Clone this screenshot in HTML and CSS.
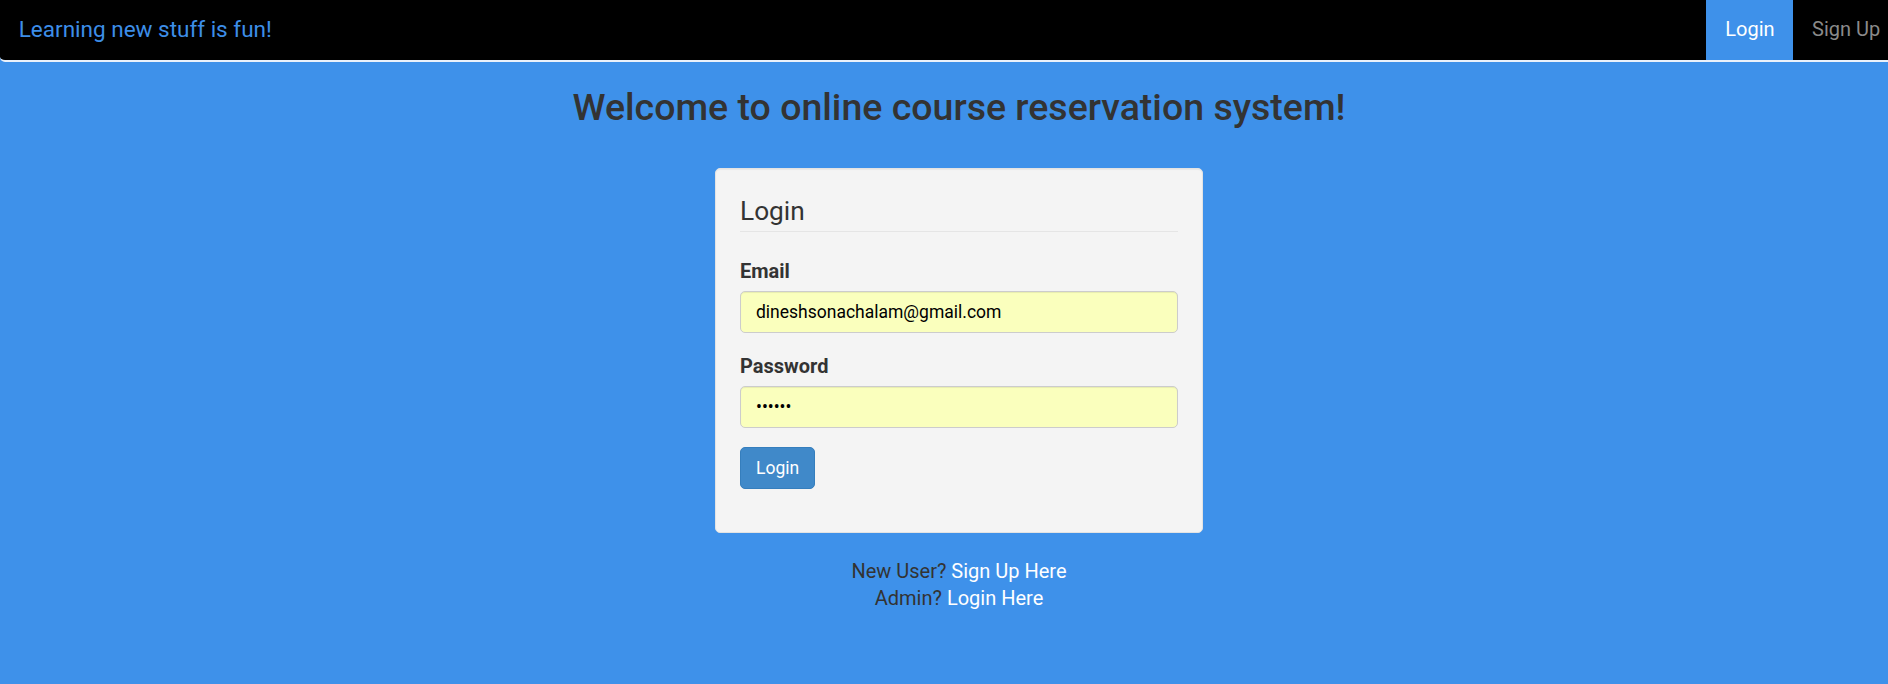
FILE: index.html
```html
<!DOCTYPE html>
<html lang="en">
<head>
<meta charset="utf-8">
<title>Online course reservation system</title>
<link rel="stylesheet" href="styles.css">
</head>
<body>
<nav class="navbar">
  <a class="brand" href="#">Learning new stuff is fun!</a>
  <ul class="nav">
    <li class="nav-item active"><a href="#">Login</a></li>
    <li class="nav-item"><a href="#">Sign Up</a></li>
  </ul>
</nav>
<main class="page">
  <h2 class="title">Welcome to online course reservation system!</h2>
  <div class="well">
    <form class="login-form">
      <fieldset class="fieldset">
        <legend class="legend">Login</legend>
        <div class="form-group">
          <label class="label" for="email">Email</label>
          <input class="form-control" id="email" type="text" value="dineshsonachalam@gmail.com">
        </div>
        <div class="form-group">
          <label class="label" for="password">Password</label>
          <input class="form-control" id="password" type="password" value="secret">
        </div>
        <div class="form-group">
          <button class="btn" type="button">Login</button>
        </div>
      </fieldset>
    </form>
  </div>
  <p class="footer-links">New User? <a href="#">Sign Up Here</a><br>Admin? <a href="#">Login Here</a></p>
</main>
</body>
</html>
```

FILE: styles.css
```css
html, body {
  margin: 0;
  padding: 0;
}

body {
  font-family: "Roboto", "Helvetica Neue", Arial, sans-serif;
  font-size: 20px;
  line-height: 1.42857;
  color: #333;
  background: #3e91ea;
  overflow-x: hidden;
  min-height: 684px;
}

.navbar {
  display: flex;
  justify-content: space-between;
  align-items: stretch;
  height: 60px;
  background: #000;
  border-bottom: 2px solid #eaf1fa;
  border-bottom-left-radius: 5px;
  overflow: hidden;
}

.brand {
  display: flex;
  align-items: center;
  padding: 0 18.75px 2px;
  font-size: 22.5px;
  line-height: 25px;
  color: #3d8ee8;
  text-decoration: none;
}

.nav {
  display: flex;
  list-style: none;
  margin: 0 -11px 0 0;
  padding: 0;
}

.nav-item a {
  display: flex;
  align-items: center;
  box-sizing: border-box;
  height: 60px;
  padding: 0 18.75px 3px;
  line-height: 28px;
  color: #8a8a8a;
  text-decoration: none;
}

.nav-item.active a {
  background: #3e91ea;
  color: #fff;
}

.page {
  display: flex;
  flex-direction: column;
  align-items: center;
  padding-left: 30px;
}

.title {
  margin: 25px 0 12.5px;
  font-size: 37.5px;
  font-weight: 500;
  line-height: 1.1;
  color: #333;
}

.well {
  box-sizing: border-box;
  width: 487.5px;
  margin: 27.5px 0 25px;
  padding: 23.75px;
  background: #f4f4f4;
  border: 1px solid #e3e3e3;
  border-radius: 5px;
  box-shadow: inset 0 1px 1px rgba(0, 0, 0, 0.05);
}

.login-form {
  margin: 0;
}

.fieldset {
  margin: 0;
  padding: 0;
  border: 0;
  min-width: 0;
}

.legend {
  display: block;
  box-sizing: border-box;
  width: 100%;
  padding: 0;
  margin: 0 0 25px;
  font-size: 26.25px;
  line-height: 37.5px;
  color: #333;
  border-bottom: 1px solid #e5e5e5;
}

.form-group {
  margin-bottom: 18.75px;
}

.label {
  display: block;
  margin-bottom: 5.5px;
  font-weight: 700;
  line-height: 28.5px;
}

.form-control {
  display: block;
  box-sizing: border-box;
  width: 100%;
  height: 42.5px;
  padding: 7.5px 15px;
  font-family: inherit;
  font-size: 17.5px;
  line-height: 25px;
  color: #000;
  background: #faffbd;
  border: 1px solid #ccc;
  border-radius: 5px;
  box-shadow: inset 0 1px 1px rgba(0, 0, 0, 0.075);
}

.btn {
  display: inline-block;
  padding: 7.5px 15px;
  font-family: inherit;
  font-size: 17.5px;
  line-height: 25px;
  color: #fff;
  background: #4089c9;
  border: 1px solid #357ebd;
  border-radius: 5px;
  cursor: pointer;
}

.footer-links {
  margin: 0;
  font-size: 20px;
  line-height: 27.5px;
  text-align: center;
  color: #333;
}

.footer-links a {
  color: #fff;
  text-decoration: none;
}
```
